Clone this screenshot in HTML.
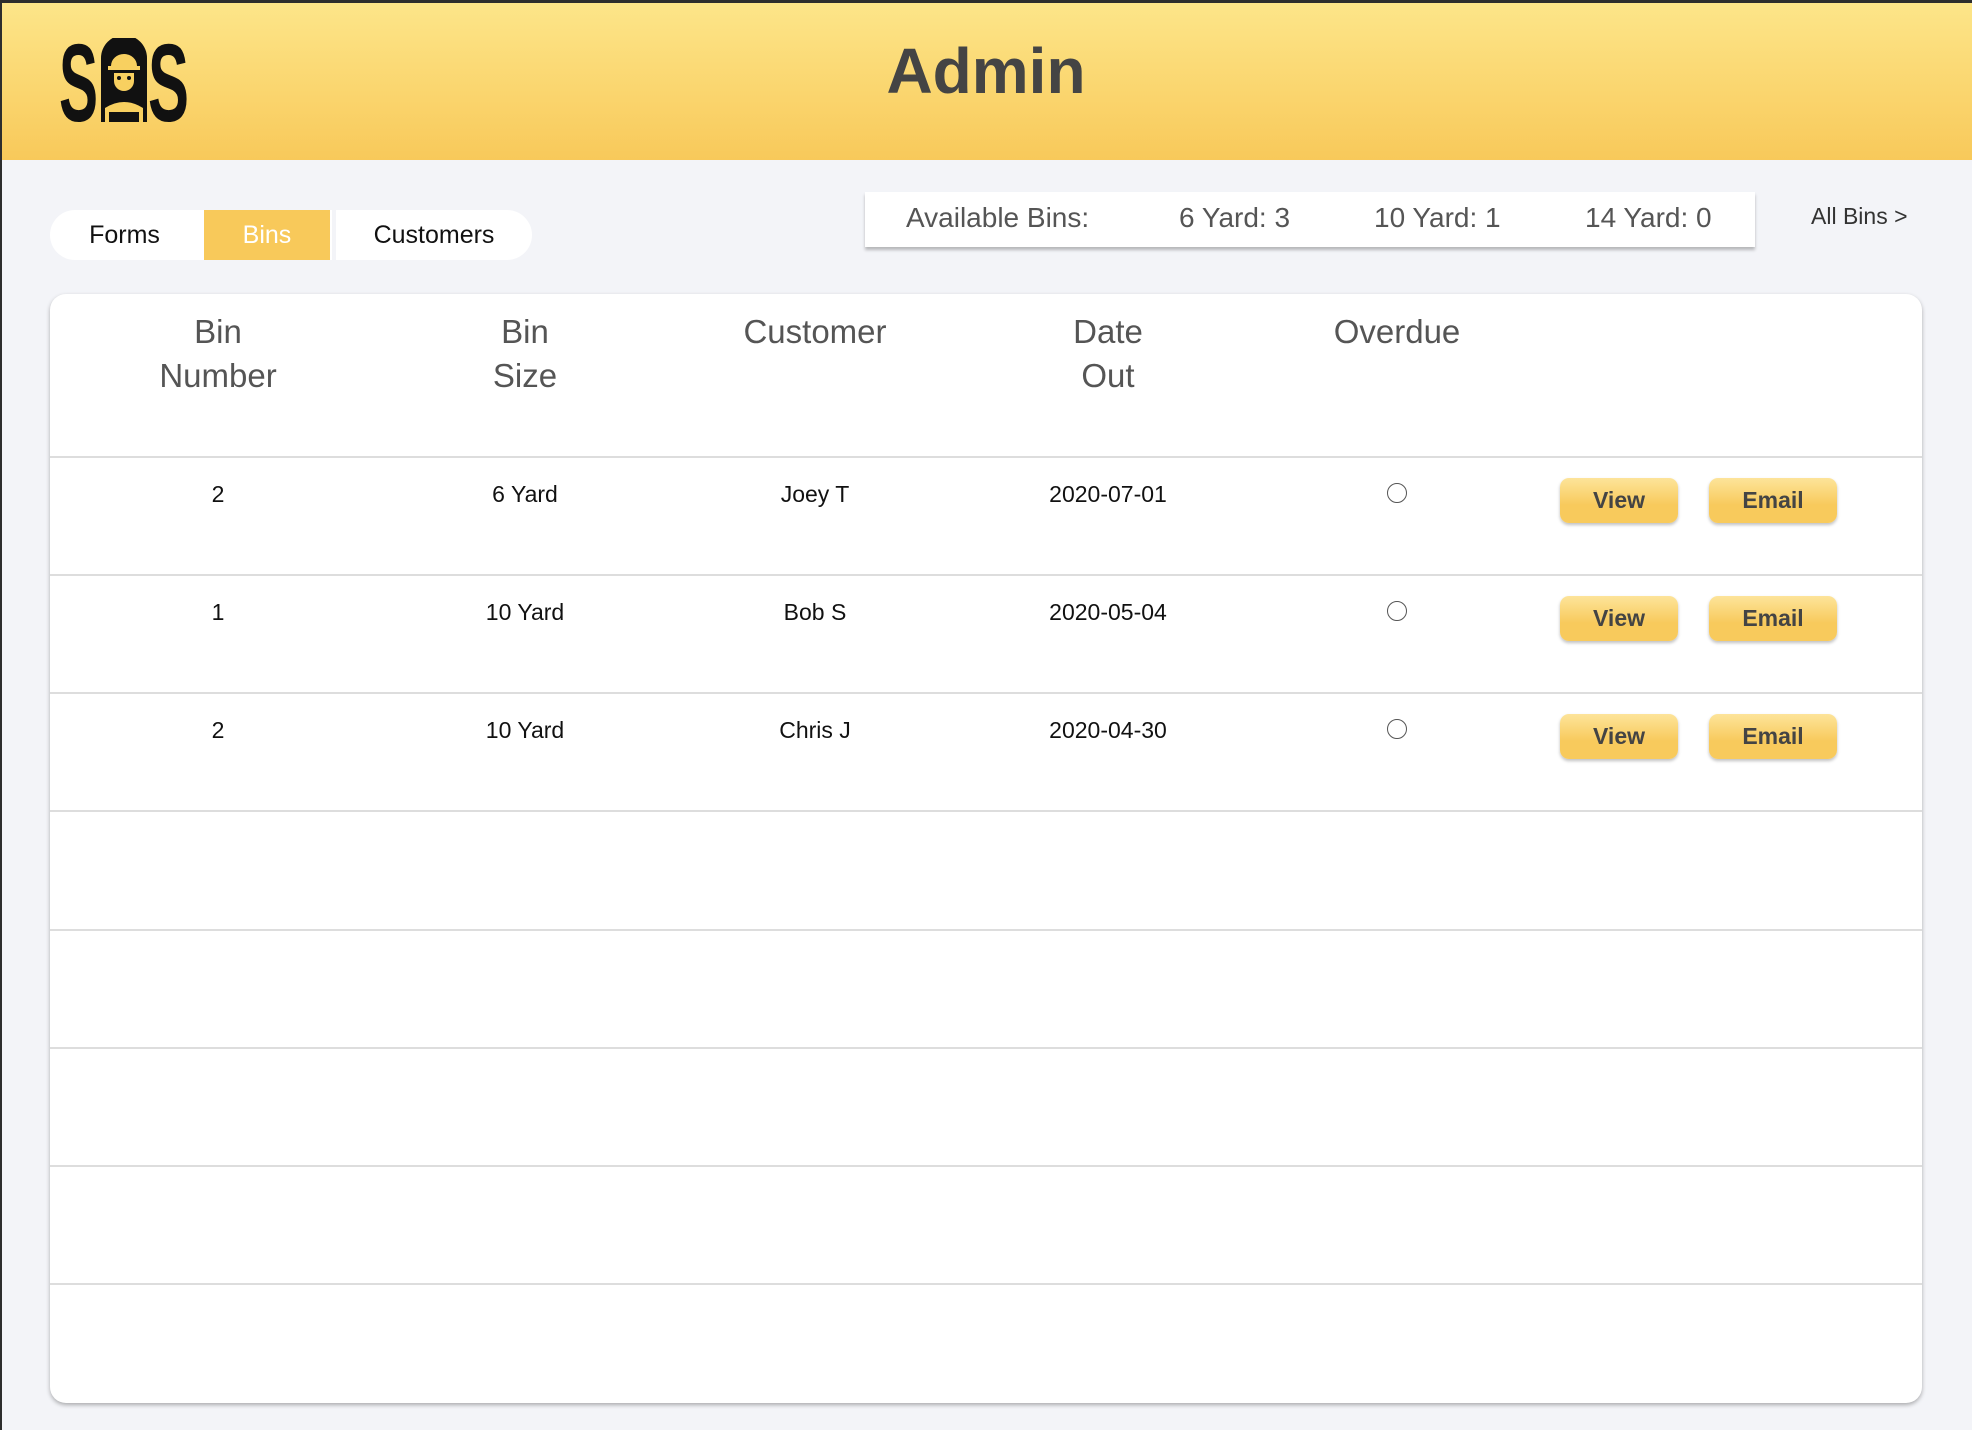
<!DOCTYPE html>
<html><head><meta charset="utf-8"><style>
*{margin:0;padding:0;box-sizing:border-box}
body{width:1972px;height:1430px;background:#f3f4f8;font-family:"Liberation Sans",sans-serif;position:relative;overflow:hidden}
.edge{position:absolute;left:0;top:0;width:1972px;height:3px;background:#2d2d2d;z-index:5}
.edgel{position:absolute;left:0;top:0;width:2px;height:1430px;background:#2d2d2d;z-index:5}
.hdr{position:absolute;left:0;top:0;width:1972px;height:160px;background:linear-gradient(#fde68a,#f8c95a)}
.title{position:absolute;left:0;width:1972px;top:34px;text-align:center;font-size:64px;font-weight:bold;color:#444}
.tabs{position:absolute;left:50px;top:210px;width:482px;height:50px;background:#fff;border-radius:25px;overflow:hidden;font-size:25px;}
.tab{position:absolute;top:0;height:50px;line-height:50px;text-align:center;color:#111}
.avail{position:absolute;left:865px;top:192px;width:890px;height:55px;background:#fff;box-shadow:0 3px 3px rgba(0,0,0,.25);font-size:28px;color:#555}
.avail span{position:absolute;top:10px}
.all{position:absolute;left:1811px;top:203px;font-size:23px;color:#333}
.card{position:absolute;left:50px;top:294px;width:1872px;height:1109px;background:#fff;border-radius:16px;box-shadow:0 2px 4px rgba(0,0,0,.3);overflow:hidden}
.h{position:absolute;top:16px;width:300px;margin-left:-150px;text-align:center;font-size:33px;line-height:44px;color:#555}
.line{position:absolute;left:0;width:1872px;height:2px;background:#ddd}
.c{position:absolute;width:300px;margin-left:-150px;text-align:center;font-size:23px;color:#111}
.radio{position:absolute;width:20px;height:20px;border:1.5px solid #555;border-radius:50%}
.btn{position:absolute;height:45px;line-height:45px;text-align:center;font-weight:bold;font-size:23px;color:#444;border-radius:9px;background:linear-gradient(#fde49a,#f8ca5c 60%);box-shadow:0 2px 3px rgba(0,0,0,.25)}
</style></head><body>
<div class="edge"></div><div class="edgel"></div>
<div class="hdr">
<svg style="position:absolute;left:59px;top:38px" width="131" height="84" viewBox="0 0 131 84">
<text x="0" y="83" font-family="Liberation Sans" font-weight="bold" font-size="110" textLength="39" lengthAdjust="spacingAndGlyphs" fill="#111">S</text>
<text x="89" y="83" font-family="Liberation Sans" font-weight="bold" font-size="110" textLength="41" lengthAdjust="spacingAndGlyphs" fill="#111">S</text>
<path d="M42 84 V20 a23 23 0 0 1 46 0 V84 Z" fill="#111"/>
<path d="M52 28 a13 12 0 0 1 26 0 h3 v4 h-32 v-4z" fill="#f8d060"/>
<path d="M55 35 h20 v8 a10 10 0 0 1 -20 0z" fill="#f8d060"/>
<circle cx="60" cy="40" r="2" fill="#111"/><circle cx="70" cy="40" r="2" fill="#111"/>
<path d="M46 84 v-14 q19 -12 38 0 v14 h-4 v-10 h-30 v10z" fill="#f8d060"/>
</svg>
<div class="title">Admin</div>
</div>
<div class="tabs">
<div class="tab" style="left:0;width:149px">Forms</div>
<div class="tab" style="left:154px;width:126px;background:#f8c95a;color:#fff">Bins</div>
<div class="tab" style="left:282px;width:200px;border-left:4px solid #f3f4f8">Customers</div>
</div>
<div class="avail"><span style="left:41px">Available Bins:</span><span style="left:314px">6 Yard: 3</span><span style="left:509px">10 Yard: 1</span><span style="left:720px">14 Yard: 0</span></div>
<div class="all">All Bins &gt;</div>
<div class="card">
<div class="h" style="left:168px">Bin<br>Number</div>
<div class="h" style="left:475px">Bin<br>Size</div>
<div class="h" style="left:765px">Customer</div>
<div class="h" style="left:1058px">Date<br>Out</div>
<div class="h" style="left:1347px">Overdue</div>
<div class="line" style="top:162px"></div>
<div class="line" style="top:280px"></div>
<div class="line" style="top:398px"></div>
<div class="line" style="top:516px"></div>
<div class="line" style="top:635px"></div>
<div class="line" style="top:753px"></div>
<div class="line" style="top:871px"></div>
<div class="line" style="top:989px"></div>

<div class="c" style="left:168px;top:187px">2</div><div class="c" style="left:475px;top:187px">6 Yard</div><div class="c" style="left:765px;top:187px">Joey T</div><div class="c" style="left:1058px;top:187px">2020-07-01</div>
<div class="radio" style="left:1337px;top:189px"></div>
<div class="btn" style="left:1510px;top:184px;width:118px">View</div><div class="btn" style="left:1659px;top:184px;width:128px">Email</div>

<div class="c" style="left:168px;top:305px">1</div><div class="c" style="left:475px;top:305px">10 Yard</div><div class="c" style="left:765px;top:305px">Bob S</div><div class="c" style="left:1058px;top:305px">2020-05-04</div>
<div class="radio" style="left:1337px;top:307px"></div>
<div class="btn" style="left:1510px;top:302px;width:118px">View</div><div class="btn" style="left:1659px;top:302px;width:128px">Email</div>

<div class="c" style="left:168px;top:423px">2</div><div class="c" style="left:475px;top:423px">10 Yard</div><div class="c" style="left:765px;top:423px">Chris J</div><div class="c" style="left:1058px;top:423px">2020-04-30</div>
<div class="radio" style="left:1337px;top:425px"></div>
<div class="btn" style="left:1510px;top:420px;width:118px">View</div><div class="btn" style="left:1659px;top:420px;width:128px">Email</div>
</div>
</body></html>
